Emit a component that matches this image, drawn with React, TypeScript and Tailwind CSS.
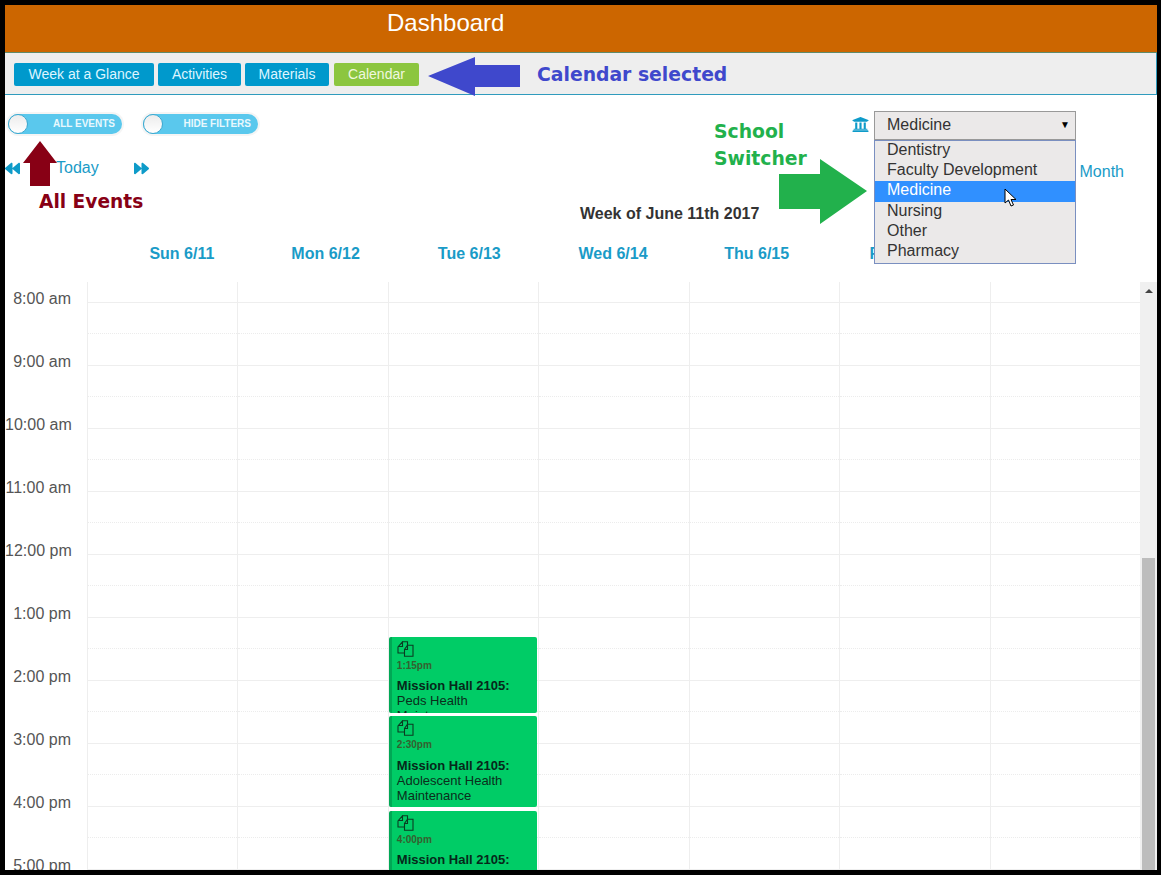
import { FaBackward, FaForward, FaUniversity } from "react-icons/fa"

const hours = ["8:00 am", "9:00 am", "10:00 am", "11:00 am", "12:00 pm", "1:00 pm", "2:00 pm", "3:00 pm", "4:00 pm", "5:00 pm"]
const days = ["Sun 6/11", "Mon 6/12", "Tue 6/13", "Wed 6/14", "Thu 6/15", "Fri 6/16", "Sat 6/17"]
const schools = ["Dentistry", "Faculty Development", "Medicine", "Nursing", "Other", "Pharmacy"]
const tabs = [
    { label: "Week at a Glance", width: "w-[140px]" },
    { label: "Activities", width: "w-[83px]" },
    { label: "Materials", width: "w-[84px]" },
]

const events = [
    { top: "top-[355px] h-[76px]", gap: "mt-[6px]", time: "1:15pm", title: "Mission Hall 2105:", desc: "Peds Health Maintenance" },
    { top: "top-[434px] h-[91px]", gap: "mt-[7px]", time: "2:30pm", title: "Mission Hall 2105:", desc: "Adolescent Health Maintenance" },
    { top: "top-[529px] h-[91px]", gap: "mt-[6px]", time: "4:00pm", title: "Mission Hall 2105:", desc: "Seeing Teens" },
]

function PagesIcon() {
    return (
        <svg viewBox="0 0 17 16" className="h-4 w-[17px]" fill="none" stroke="#0b3b22" strokeWidth="1.1">
            <path d="M5.5 .8H10.5V4.2M7.5 12H1V6L5.5 .8V5.5H1" />
            <path d="M10.5 4.2H16V15.2H7.5V8.5L10.5 4.2V8.5H7.5" />
        </svg>
    )
}

function Toggle({ label, className }: { label: string; className: string }) {
    return (
        <div className={`-mt-[3px] flex h-5 items-center justify-end rounded-full bg-[#5ac8ed] pr-[7px] ring-2 ring-[#f5f5f5] ${className}`}>
            <div className="mr-auto h-5 w-5 rounded-full border border-[#3fa9cf] bg-gradient-to-b from-[#ececec] to-white" />
            <span className="text-[10px] leading-none font-bold text-[#e9f8fd] uppercase">{label}</span>
        </div>
    )
}

function DayColumn({ children }: { children?: React.ReactNode }) {
    return (
        <div className="relative border-l border-[#eeeeee]">
            <div className="h-5" />
            {hours.map((h) => (
                <div key={h} className="h-[63px] border-t border-[#eeeeee]">
                    <div className="h-[31px] border-b border-dotted border-[#ececec]" />
                </div>
            ))}
            {children}
        </div>
    )
}

export default function App() {
    return (
        <div className="relative h-[876px] w-[1161px] overflow-hidden bg-white font-['Liberation_Sans',Arial,sans-serif]">
            <div className="flex h-[875px] flex-col overflow-hidden border-t-[5px] border-r-4 border-b-[5px] border-l-[5px] border-black">
                <header className="h-[48px] shrink-0 border-b border-[#5f8a6a] bg-[#cc6600] pt-[4px] pl-[382px] text-2xl leading-[28px] text-white">
                    Dashboard
                </header>

                <nav className="flex h-[42px] shrink-0 items-center gap-1 border-r border-b border-[#2f9bbd] bg-[#eeeeee] pt-px pl-[9px]">
                    {tabs.map((t) => (
                        <div key={t.label} className={`flex h-[23px] items-center justify-center rounded-[2px] bg-[#0099cc] text-sm text-[#def5ff] ${t.width}`}>
                            {t.label}
                        </div>
                    ))}
                    <div className="ml-[1px] flex h-[23px] w-[85px] items-center justify-center rounded-[2px] bg-[#8cc63f] text-sm text-[#f0f8df]">
                        Calendar
                    </div>
                </nav>

                <div className="mt-[16px] flex h-[29px] shrink-0 items-center pr-[81px] pl-[3px]">
                    <Toggle label="All Events" className="w-[114px]" />
                    <Toggle label="Hide Filters" className="ml-[21px] w-[115px]" />
                    <FaUniversity className="mr-[5px] ml-auto -translate-y-px text-[#0e9bc9]" size={17} />
                    <div className="relative h-[29px] w-[202px] border border-[#999999] bg-[#ebe9e9] pl-3 text-base leading-[25px] text-[#333333]">
                        Medicine
                        <span className="absolute top-0 right-[5px] text-[10px] text-black">▼</span>
                        <ul className="absolute top-[28px] -left-px z-10 w-[202px] border border-[#7a8fc0] bg-[#ebe9e9] pb-px">
                            {schools.map((s) => (
                                <li
                                    key={s}
                                    className={`h-[20.2px] pl-3 text-base leading-[18px] ${s === "Medicine" ? "bg-[#3090ff] text-white" : "text-[#333333]"}`}
                                >
                                    {s}
                                </li>
                            ))}
                        </ul>
                    </div>
                </div>

                <div className="mt-[18px] flex h-[20px] shrink-0 items-center text-base text-[#1a9bc7]">
                    <FaBackward size={15} className="text-[#0e9bc9]" />
                    <span className="ml-[36px]">Today</span>
                    <FaForward size={15} className="ml-[35px] text-[#0e9bc9]" />
                    <span className="mt-[8px] mr-[33px] ml-auto">Month</span>
                </div>

                <div className="mt-[27px] h-[18px] shrink-0 pl-[575px] text-base leading-[18px] font-bold text-[#333333]">
                    Week of June 11th 2017
                </div>

                <div className="mt-[22px] grid h-[18px] w-[1111px] shrink-0 grid-cols-7 pl-[105px] text-center text-base leading-[18px] font-bold text-[#1a9bc7]">
                    {days.map((d, i) => (
                        <div key={d} className={i > 4 ? "-translate-x-[3px]" : ""}>
                            {d}
                        </div>
                    ))}
                </div>

                <div className="mt-[19px] flex min-h-0 flex-1 overflow-hidden">
                    <div className="w-[82px] shrink-0 pt-[8px] pr-[16px]">
                        {hours.map((h) => (
                            <div key={h} className="h-[63px] text-right text-base leading-[18px] whitespace-nowrap text-[#555555]">
                                {h}
                            </div>
                        ))}
                    </div>
                    <div className="grid flex-1 grid-cols-7">
                        <DayColumn />
                        <DayColumn />
                        <DayColumn>
                            {events.map((e) => (
                                <div
                                    key={e.time}
                                    className={`absolute left-0 w-[148px] overflow-hidden rounded-[2px] border-l-[3px] border-[#00a855] bg-[#00cc66] pt-[4px] pl-[5px] text-[13px] leading-[15px] text-[#0b2e1c] ${e.top}`}
                                >
                                    <PagesIcon />
                                    <div className="mt-[3px] text-[10px] leading-[12px] font-bold text-[#35602f]">{e.time}</div>
                                    <div className={`font-bold text-[#06281a] ${e.gap}`}>{e.title}</div>
                                    <div>{e.desc}</div>
                                </div>
                            ))}
                        </DayColumn>
                        <DayColumn />
                        <DayColumn />
                        <DayColumn />
                        <DayColumn />
                    </div>
                    <div className="flex w-[17px] shrink-0 flex-col bg-[#f0f0f0] px-[2px]">
                        <div className="mx-auto mt-[7px] h-0 w-0 border-x-[4px] border-b-[4px] border-x-transparent border-b-[#444444]" />
                        <div className="mt-[265px] flex-1 bg-[#bdbdbd]" />
                    </div>
                </div>
            </div>

            {/* annotations drawn over the screenshot */}
            <svg className="absolute top-[57px] left-[428px]" width="92" height="39" viewBox="0 0 92 39">
                <path d="M0 19 L47 0 V8 H92 V30 H47 V39 Z" fill="#3f48cc" />
            </svg>
            <div className="absolute top-[64px] left-[537px] font-['DejaVu_Sans',sans-serif] text-[18.8px] leading-[22px] font-bold whitespace-nowrap text-[#3f48cc]">
                Calendar selected
            </div>
            <svg className="absolute top-[141px] left-[23px]" width="34" height="45" viewBox="0 0 34 45">
                <path d="M17 0 L34 22 H27 V45 H7 V22 H0 Z" fill="#880015" />
            </svg>
            <div className="absolute top-[191px] left-[39px] font-['DejaVu_Sans',sans-serif] text-[18.6px] leading-[22px] font-bold whitespace-nowrap text-[#880015]">
                All Events
            </div>
            <div className="absolute top-[118px] left-[714px] font-['DejaVu_Sans',sans-serif] text-[18.8px] leading-[27px] font-bold text-[#22b14c]">
                School
                <br />
                Switcher
            </div>
            <svg className="absolute top-[159px] left-[779px]" width="88" height="65" viewBox="0 0 88 65">
                <path d="M0 15 H41 V0 L88 32 L41 65 V50 H0 Z" fill="#22b14c" />
            </svg>
            <svg className="absolute top-[188px] left-[1004px] z-20" width="14" height="20" viewBox="0 0 14 20">
                <path d="M1 1 V15 L4.5 12 L7 18 L9.5 17 L7 11.5 H12 Z" fill="#ffffff" stroke="#000000" strokeWidth="1" />
            </svg>
        </div>
    )
}
